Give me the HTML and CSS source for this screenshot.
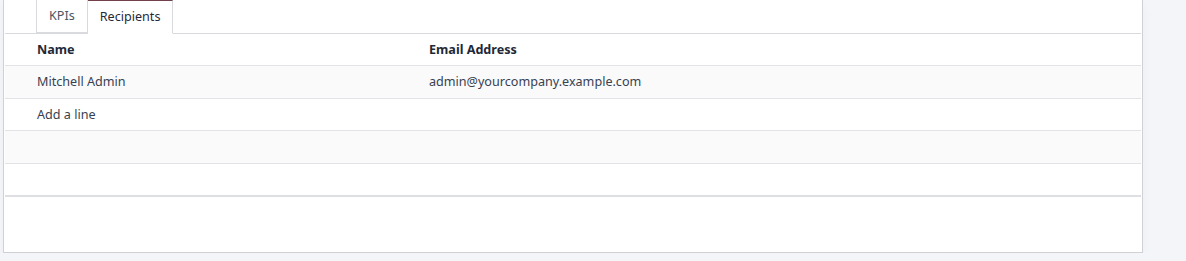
FILE: index.html
```html
<!DOCTYPE html>
<html lang="en">
<head>
  <meta charset="UTF-8" />
  <title>Digest - Recipients</title>
  <link rel="stylesheet" href="styles.css">
</head>
<body>

<div class="sheet">
  <ul class="tabs">
    <li class="tab">KPIs</li>
    <li class="tab active">Recipients</li>
  </ul>

  <table class="lines">
    <thead>
      <tr>
        <th class="col-name">Name</th>
        <th>Email Address</th>
      </tr>
    </thead>
    <tbody>
      <tr class="odd">
        <td>Mitchell Admin</td>
        <td>admin@yourcompany.example.com</td>
      </tr>
      <tr>
        <td colspan="2" class="add-line">Add a line</td>
      </tr>
      <tr class="odd">
        <td colspan="2"></td>
      </tr>
      <tr>
        <td colspan="2"></td>
      </tr>
    </tbody>
    <tfoot>
      <tr>
        <td colspan="2"></td>
      </tr>
    </tfoot>
  </table>
</div>

</body>
</html>
```

FILE: styles.css
```css
body {
  font-family: 'Noto Sans', sans-serif;
  font-size: 12.6px;
  color: #374151;
  background-color: #f4f5f8;
  margin: 0;
  padding: 0;
}
.sheet {
  margin-left: 3px;
  width: 1136px;
  height: 252px;
  background-color: white;
  border: 1px solid #cfd1d6;
  border-top: none;
  padding: 0 1px;
  box-shadow: 0 4px 10px rgba(0,0,0,0.03);
}
.tabs {
  list-style: none;
  margin: 0;
  padding: 0 0 0 31px;
  display: flex;
  border-bottom: 1px solid #d8dadd;
}
.tab {
  height: 32px;
  line-height: 32px;
  padding: 0 12px;
  color: #4b5563;
  border: 1px solid #d8dadd;
  border-top: none;
  margin-bottom: -1px;
}
.tab + .tab {
  border-left: none;
}
.tab.active {
  color: #1f2937;
  background-color: white;
  border-top: 1px solid #71404b;
  border-bottom: 1px solid white;
  height: 32px;
  line-height: 31px;
}
.lines {
  width: 100%;
  border-collapse: collapse;
}
.lines th, .lines td {
  text-align: left;
  padding: 0 0 0 32px;
  height: 31.5px;
  border-bottom: 1px solid #e2e3e6;
}
.lines thead th {
  height: 31px;
  color: #1f2937;
  font-weight: bold;
}
.col-name {
  width: 360px;
}
.lines tr.odd td {
  background-color: #fafafb;
}
.lines tfoot td {
  height: 0;
  border-top: 2px solid #dedfe3;
  border-bottom: none;
}
```
